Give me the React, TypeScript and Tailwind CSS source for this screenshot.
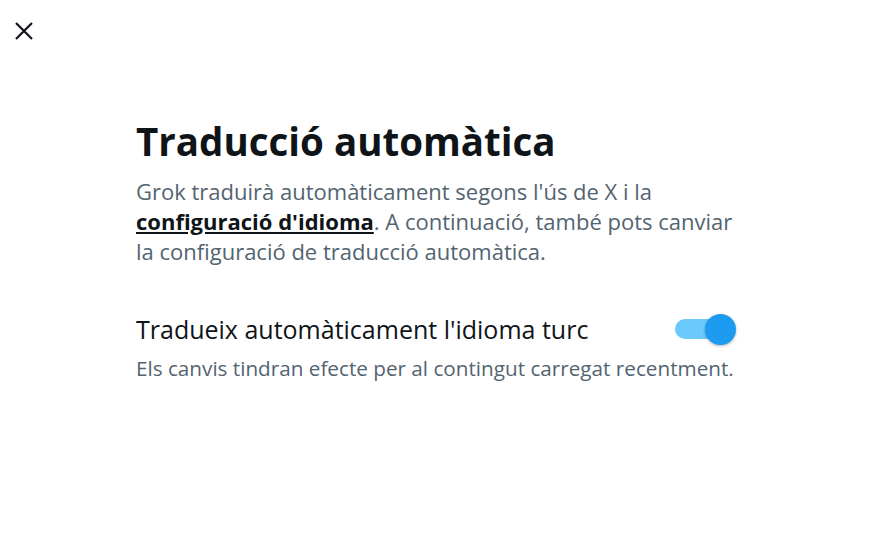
import React from "react";

export default function App() {
  return (
    <div
      className="w-[870px] h-[539px] bg-white overflow-hidden relative"
      style={{ fontFamily: '"Open Sans", "Noto Sans", sans-serif' }}
    >
      <div className="pt-[22px] pl-[15px] h-[119px]">
        <svg width="18" height="18" viewBox="0 0 18 18" fill="none">
          <path d="M1 1 L17 17 M17 1 L1 17" stroke="#0f1419" strokeWidth="2.2" />
        </svg>
      </div>
      <div className="ml-[136px] w-[600px]">
        <h1 className="text-[38.5px] leading-[44px] font-bold text-[#0f1419]">Traducció automàtica</h1>
        <p className="mt-[13px] text-[22px] leading-[30px] text-[#536471]">
          Grok traduirà automàticament segons l'ús de X i la{" "}
          <span className="font-bold text-[#0f1419] underline">configuració d'idioma</span>. A continuació,
          també pots canviar la configuració de traducció automàtica.
        </p>
        <div className="mt-[47px] flex items-center justify-between">
          <span className="text-[25px] leading-[32px] text-[#0f1419]">Tradueix automàticament l'idioma turc</span>
          <div className="relative w-[61px] h-[31px] flex items-center">
            <div className="w-[60px] h-[20px] rounded-full bg-[#6bc9fb]" />
            <div className="absolute right-0 top-0 w-[31px] h-[31px] rounded-full bg-[#1d9bf0] shadow-[0_1px_3px_rgba(0,0,0,0.3)]" />
          </div>
        </div>
        <p className="mt-[10px] text-[20.7px] leading-[26px] text-[#536471] whitespace-nowrap">
          Els canvis tindran efecte per al contingut carregat recentment.
        </p>
      </div>
    </div>
  );
}
